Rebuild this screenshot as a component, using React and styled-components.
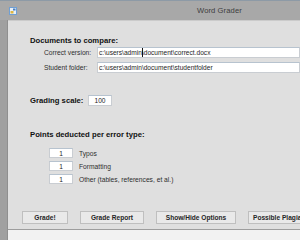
import React from 'react';
import styled, { createGlobalStyle } from 'styled-components';

const GlobalStyle = createGlobalStyle`
  html, body {
    margin: 0;
    padding: 0;
    background: #a3a3a3;
    overflow: hidden;
  }
  body {
    font-family: "Liberation Sans", Arial, sans-serif;
  }
`;

const Window = styled.div`
  width: 300px;
  height: 240px;
  display: flex;
  flex-direction: column;
`;

const TitleBar = styled.div`
  height: 19px;
  flex: none;
  display: flex;
  align-items: center;
  background: #a8a8a8;
  border-top: 1px solid #8d9aa6;
  padding-left: 9px;
`;

const Title = styled.span`
  margin-left: 180px;
  font-size: 7.6px;
  color: #3d3d3d;
  letter-spacing: 0.1px;
`;

const Body = styled.div`
  flex: 1;
  display: flex;
  min-height: 0;
`;

const Frame = styled.div`
  width: 7px;
  flex: none;
  background: #a0a0a0;
  border-right: 1px solid #8f8f8f;
`;

const Main = styled.div`
  flex: 1;
  display: flex;
  flex-direction: column;
  min-width: 0;
`;

const Panel = styled.div`
  flex: 1;
  background: #dfdfdf;
  border-top: 1px solid #cbcbcb;
  padding: 15px 0 0 22px;
  display: flex;
  flex-direction: column;
`;

const Heading = styled.div`
  height: 10px;
  line-height: 10px;
  font-size: 7.7px;
  font-weight: bold;
  color: #111;
  margin-top: ${p => p.$top || 0}px;
`;

const FieldRow = styled.div`
  display: flex;
  align-items: center;
  height: 11px;
  margin-top: ${p => p.$top || 0}px;
  padding-left: ${p => p.$indent || 0}px;
`;

const Label = styled.span`
  width: ${p => (p.$width ? `${p.$width}px` : 'auto')};
  flex: none;
  font-size: 6.7px;
  color: #2e2e2e;
  white-space: nowrap;
`;

const BoldLabel = styled(Label)`
  font-size: 7.7px;
  font-weight: bold;
  color: #111;
`;

const TextBox = styled.div`
  flex: ${p => (p.$width ? 'none' : 1)};
  width: ${p => (p.$width ? `${p.$width}px` : 'auto')};
  height: ${p => p.$height || 11}px;
  box-sizing: border-box;
  background: #fff;
  border: 1px solid #c9cdd2;
  border-top-color: #b7c3cf;
  display: flex;
  align-items: center;
  justify-content: ${p => (p.$center ? 'center' : 'flex-start')};
  padding-left: ${p => (p.$center ? 0 : 1)}px;
  font-size: 6.6px;
  color: #1e1e1e;
  white-space: nowrap;
  overflow: hidden;
`;

const Caret = styled.span`
  display: inline-block;
  width: 1px;
  height: 9px;
  background: #111;
  margin-right: -1px;
  vertical-align: middle;
`;

const ErrorList = styled.div`
  display: flex;
  flex-direction: column;
  gap: 3px;
  margin-top: 8px;
  padding-left: 19px;
`;

const ErrorRow = styled.div`
  display: flex;
  align-items: center;
  gap: 6px;
  height: 10px;
`;

const ButtonRow = styled.div`
  display: flex;
  gap: 12px;
  margin-top: 27px;
  margin-left: -8px;
`;

const Button = styled.div`
  flex: none;
  width: ${p => p.$width}px;
  height: 13px;
  box-sizing: border-box;
  background: #e9e9e9;
  border: 1px solid #bfbfbf;
  display: flex;
  align-items: center;
  justify-content: ${p => (p.$clip ? 'flex-start' : 'center')};
  padding-left: ${p => (p.$clip ? 4 : 0)}px;
  font-size: 6.6px;
  font-weight: bold;
  color: #262626;
  white-space: nowrap;
  overflow: hidden;
`;

const StatusBar = styled.div`
  height: 10px;
  flex: none;
  background: #f2f2f2;
  border-top: 1px solid #9d9d9d;
`;

const AppIcon = () => (
  <svg width="8" height="8" viewBox="0 0 8 8">
    <rect x="0" y="0" width="8" height="8" fill="#6f9fd4" />
    <rect x="1" y="1" width="6" height="6" fill="#e8f0f8" />
    <rect x="1.5" y="4" width="3" height="2.5" fill="#e0b640" />
    <rect x="4" y="1.5" width="2.5" height="2" fill="#4a7fc0" />
  </svg>
);

const errorTypes = ['Typos', 'Formatting', 'Other (tables, references, et al.)'];

const App = () => (
  <>
    <GlobalStyle />
    <Window>
      <TitleBar>
        <AppIcon />
        <Title>Word Grader</Title>
      </TitleBar>
      <Body>
        <Frame />
        <Main>
          <Panel>
            <Heading>Documents to compare:</Heading>
            <FieldRow $top={1} $indent={14}>
              <Label $width={53}>Correct version:</Label>
              <TextBox>
                c:\users\admin<Caret />\document\correct.docx
              </TextBox>
            </FieldRow>
            <FieldRow $top={4} $indent={14}>
              <Label $width={53}>Student folder:</Label>
              <TextBox>c:\users\admin\document\studentfolder</TextBox>
            </FieldRow>

            <FieldRow $top={22}>
              <BoldLabel $width={58}>Grading scale:</BoldLabel>
              <TextBox $width={24} $center>100</TextBox>
            </FieldRow>

            <Heading $top={24}>Points deducted per error type:</Heading>
            <ErrorList>
              {errorTypes.map(t => (
                <ErrorRow key={t}>
                  <TextBox $width={24} $height={10} $center>1</TextBox>
                  <Label>{t}</Label>
                </ErrorRow>
              ))}
            </ErrorList>

            <ButtonRow>
              <Button $width={46}>Grade!</Button>
              <Button $width={64}>Grade Report</Button>
              <Button $width={80}>Show/Hide Options</Button>
              <Button $width={80} $clip>Possible Plagiarism</Button>
            </ButtonRow>
          </Panel>
          <StatusBar />
        </Main>
      </Body>
    </Window>
  </>
);

export default App;
